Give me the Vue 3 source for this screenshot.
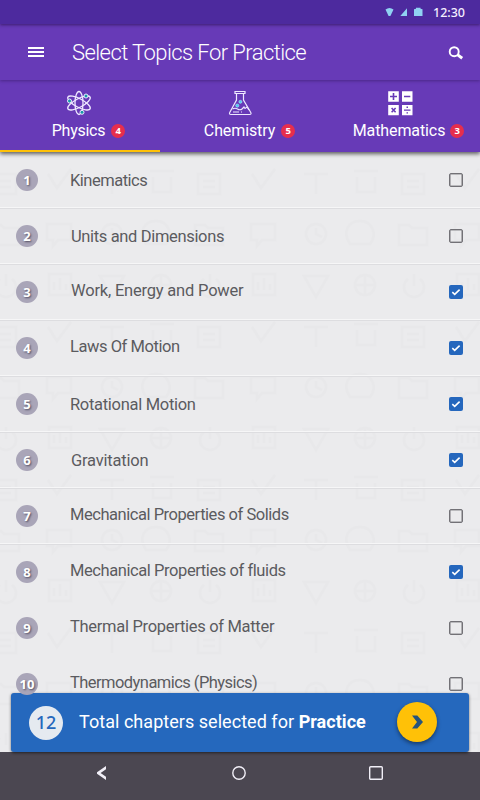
<script setup>
import { ref, computed } from 'vue'

const tabs = [
  { name: 'Physics', count: 4, icon: 'atom' },
  { name: 'Chemistry', count: 5, icon: 'flask' },
  { name: 'Mathematics', count: 3, icon: 'math' },
]
const activeTab = ref('Physics')

const topics = ref([
  { name: 'Kinematics', checked: false },
  { name: 'Units and Dimensions', checked: false },
  { name: 'Work, Energy and Power', checked: true, raised: true },
  { name: 'Laws Of Motion', checked: true, raised: true },
  { name: 'Rotational Motion', checked: true },
  { name: 'Gravitation', checked: true },
  { name: 'Mechanical Properties of Solids', checked: false, raised: true },
  { name: 'Mechanical Properties of fluids', checked: true, raised: true },
  { name: 'Thermal Properties of Matter', checked: false, raised: true },
  { name: 'Thermodynamics (Physics)', checked: false, raised: true },
])
const total = computed(() => tabs.reduce((sum, t) => sum + t.count, 0))
</script>

<template>
  <div class="screen">
    <div class="status">
      <svg class="signals" width="40" height="12" viewBox="0 0 40 12" fill="#90d2f2">
        <path d="M0.5 2.6 Q4.5 -0.8 8.5 2.6 L5.4 9 H3.6Z" />
        <path d="M15.3 9 L22 1.2 V9Z" />
        <path d="M29 2.2 L31 1.8 V.8 H35.5 V1.8 L37.5 2.2 V9 H29Z" />
      </svg>
      <span class="clock">12:30</span>
    </div>

    <header class="appbar">
      <svg class="menu" width="16" height="10" viewBox="0 0 16 10" fill="#fff">
        <path d="M0 0H16V2H0ZM0 4H16V6H0ZM0 8H16V10H0Z" />
      </svg>
      <h1 class="title">Select Topics For Practice</h1>
      <svg class="search" width="16" height="14" viewBox="0 0 16 14" fill="none" stroke="#fff">
        <circle cx="6.2" cy="5.7" r="4.5" stroke-width="1.9" />
        <path d="M9.4 8.6L14.2 12.2" stroke-width="3" />
      </svg>
    </header>

    <nav class="tabs">
      <div v-for="t in tabs" :key="t.name" class="tab" :class="{ active: t.name === activeTab }" @click="activeTab = t.name">
        <svg v-if="t.icon === 'atom'" class="tab-icon" width="26" height="26" viewBox="0 0 26 26" fill="none" stroke="#eee8ff" stroke-width="1.3">
          <ellipse cx="13" cy="13" rx="4" ry="11.5" />
          <ellipse cx="13" cy="13" rx="4.2" ry="12.6" transform="rotate(62 13 13)" />
          <ellipse cx="13" cy="13" rx="4.2" ry="12.6" transform="rotate(-62 13 13)" />
          <g fill="#159ba8" stroke-width="1">
            <circle cx="3.5" cy="11" r="2" /><circle cx="20" cy="6" r="2" /><circle cx="16" cy="22.3" r="2" />
          </g>
        </svg>
        <svg v-else-if="t.icon === 'flask'" class="tab-icon" width="26" height="26" viewBox="0 0 26 26" fill="none" stroke="#eee8ff" stroke-width="1.2">
          <path d="M8 1.5H18V3.5H8ZM9.5 3.5V10L3 22Q1.6 24.5 4 24.5H22.5Q25 24.5 23.5 22L16.5 10V3.5" />
          <path d="M15 19L17 17L18 18.5L20 17L22 20M5.5 19Q8 17.5 10.5 19T15 19M6 22H12M14 22H15" />
          <g fill="#4acdf0" stroke="#aee9ff" stroke-width=".6"><circle cx="10.3" cy="15.6" r="1.6" /><circle cx="13.4" cy="11.8" r="1.5" /></g>
        </svg>
        <svg v-else class="tab-icon" width="26" height="26" viewBox="0 0 26 26">
          <path fill="#fff" d="M1.2 1.2H11.8V11.8H1.2ZM15 1.2H25.5V11.8H15ZM1.2 15H11.8V25.3H1.2ZM15 15H25.5V25.3H15Z" />
          <path stroke="#673ab7" stroke-width="1.6" fill="none" d="M3 6.5H10M6.5 3V10M17 6.5H23.3M4.6 18L8.6 22.2M8.6 18L4.6 22.2" />
          <path stroke="#673ab7" stroke-width="1.4" d="M17 20.1H23.5M19.5 17.3H21M19.5 22.9H21" />
        </svg>
        <div class="tab-label"><span class="tab-name">{{ t.name }}</span><span class="badge">{{ t.count }}</span></div>
      </div>
    </nav>

    <main class="list">
      <svg class="backdrop" width="480" height="600" aria-hidden="true">
        <defs>
          <pattern id="school" x="40" width="204" height="153" patternUnits="userSpaceOnUse">
            <g fill="none" stroke="#000" stroke-width="2.5">
              <path d="M8 22L17 36L31 17M60 22H84M72 22V42M110 19H134M113 25V40H131V25M158 22H180V42H158ZM163 29H175M163 35H175" />
              <path d="M7 72H31V88H18L13 94V88H7ZM106 92C98 80 104 69 116 69S134 82 126 92ZM155 73H165L168 76H183V93H155Z" />
              <circle cx="72" cy="82" r="10" /><path d="M72 76V82L78 85" />
              <path d="M9 122H31V143H9ZM14 138V130M20 138V126M26 138V132M60 124H84L72 145ZM170 122V134M164 127A10 10 0 1 0 176 127" />
              <circle cx="121" cy="133" r="10" /><path d="M111 133H131M121 123V143" />
            </g>
          </pattern>
        </defs>
        <rect width="480" height="600" fill="url(#school)" />
      </svg>
      <div v-for="(t, i) in topics" :key="t.name" class="row">
        <span class="num">{{ i + 1 }}</span>
        <span class="topic" :class="['t' + (i + 1), { raised: t.raised }]">{{ t.name }}</span>
        <span class="check" :class="{ on: t.checked }" @click="t.checked = !t.checked">
          <svg v-if="t.checked" width="14" height="14" viewBox="0 0 14 14" fill="none" stroke="#fff" stroke-width="1.6"><path d="M3.3 7.2L5.7 9.4L10.6 4.6" /></svg>
        </span>
      </div>
    </main>

    <section class="summary">
      <span class="total">{{ total }}</span>
      <span class="summary-text">Total chapters selected for <b>Practice</b></span>
      <button class="go" aria-label="Continue">
        <svg width="14" height="14" viewBox="0 0 14 14" fill="#26547c"><path d="M2 .5H7.3L13 7L7.3 13.5H2L7 7Z" /></svg>
      </button>
    </section>

    <footer class="navbar">
      <svg width="12" height="14" viewBox="0 0 12 14" fill="#f1eff7"><path d="M10 0V3.2L4.6 7L10 10.8V14L1 7.8V6.2Z" /></svg>
      <svg width="14" height="14" viewBox="0 0 14 14" fill="none" stroke="#f1eff7" stroke-width="1.4"><circle cx="7" cy="7" r="6.2" /></svg>
      <svg width="14" height="14" viewBox="0 0 14 14" fill="none" stroke="#f1eff7" stroke-width="1.4"><rect x=".7" y=".7" width="12.6" height="12.6" rx="1" /></svg>
    </footer>
  </div>
</template>

<style>
body { margin: 0; }
</style>

<style scoped>
.screen { position: relative; width: 480px; height: 800px; overflow: hidden; display: flex; flex-direction: column; background: #ebebed; font-family: Roboto, "Noto Sans", sans-serif; color: #5b5b5f; box-sizing: border-box; }
.screen * { box-sizing: border-box; }
.status { height: 24px; flex: none; background: #4d2a9e; display: flex; align-items: center; justify-content: flex-end; padding-right: 14px; z-index: 3; box-shadow: 0 1px 3px rgba(30, 10, 60, .6); }
.signals { margin: 2px 8px 0 0; }
.clock { width: 33px; font: 500 12.5px/24px "Noto Sans", sans-serif; color: #f4efff; padding-top: 1px; white-space: nowrap; }
.appbar { height: 56px; flex: none; background: #673ab7; display: flex; align-items: center; padding: 0 16px 0 28px; z-index: 2; box-shadow: 0 1px 3px rgba(30, 10, 60, .4); }
.title { margin: 1px 0 0 28px; flex: 1; font-size: 22px; line-height: 30px; font-weight: 300; letter-spacing: -.58px; color: #fff; white-space: nowrap; }
.search { margin-top: 1px; }
.tabs { height: 72px; flex: none; background: #673ab7; display: grid; grid-template-columns: repeat(3, 160px); z-index: 1; box-shadow: 0 2px 4px rgba(0, 0, 0, .6); }
.tab { display: flex; flex-direction: column; align-items: center; padding-top: 10px; border-bottom: 2px solid transparent; }
.tab.active { border-bottom-color: #ffc107; }
.tab-icon { flex: none; }
.tab:first-child .tab-icon { margin-right: 2px; }
.tab-label { display: flex; align-items: center; height: 24px; margin-top: 3px; gap: 6px; padding-left: 19px; }
.tab:first-child .tab-label { padding-left: 17px; }
.tab:last-child .tab-label { padding-left: 17px; gap: 5px; }
.tab-name { font-size: 16px; line-height: 24px; color: #fff; white-space: nowrap; letter-spacing: -.1px; }
.tab:first-child .tab-name { letter-spacing: -.25px; }
.badge { width: 14px; height: 14px; margin-bottom: 1px; border-radius: 50%; background: #e62e4d; color: #fff; font: 700 9.5px/14px "Noto Sans", sans-serif; text-align: center; }
.list { position: relative; flex: 1; min-height: 0; overflow: hidden; }
.backdrop { position: absolute; inset: 0; opacity: .007; }
.row { position: relative; height: 56px; display: flex; align-items: center; padding: 0 17px 0 16px; border-top: 1px solid #dddde0; box-shadow: 0 -1px 0 #f6f6f7; }
.row:first-of-type, .row:nth-last-child(-n+2) { border-top-color: transparent; box-shadow: none; }
.num { position: relative; z-index: 5; width: 22px; height: 22px; flex: none; border-radius: 50%; background: #a9a5b8; color: #fff; font: 700 13px/22px "Noto Sans", sans-serif; text-align: center; text-shadow: 1px 1px 2px rgba(60, 55, 75, .8); margin-bottom: 1px; }
.topic { flex: 1; margin: 1px 0 0 32px; font-size: 16.5px; line-height: 24px; white-space: nowrap; letter-spacing: -.3px; }
.topic.raised { margin: 0 0 3px 32px; }
.t1 { letter-spacing: -.5px; }
.t2 { letter-spacing: -.35px; padding-left: 1px; }
.t3 { letter-spacing: -.2px; padding-left: 1px; }
.t4 { letter-spacing: -.44px; }
.t6 { letter-spacing: -.2px; padding-left: 1px; }
.t7 { letter-spacing: -.46px; }
.t8 { letter-spacing: -.42px; }
.t10 { letter-spacing: -.55px; }
.check { width: 14px; height: 14px; flex: none; border: 1px solid #727176; box-shadow: inset 0 0 0 .6px #8a898d; border-radius: 2px; margin-bottom: 1px; }
.check.on { border: 0; background: #2567bd; box-shadow: none; }
.check svg { display: block; }
.summary { position: absolute; left: 11px; top: 693px; width: 458px; height: 59px; z-index: 4; background: #2568bd; border-radius: 3px; box-shadow: 0 1px 3px rgba(0, 0, 0, .55); display: flex; align-items: center; padding: 0 32px 0 18px; }
.total { width: 34px; height: 34px; flex: none; border-radius: 50%; background: #e5eaf0; color: #2568bd; font: 500 18px/33px "Noto Sans", sans-serif; text-align: center; }
.summary-text { flex: 1; margin: 0 0 3px 16px; font-size: 18px; letter-spacing: .04px; color: #fff; white-space: nowrap; }
.summary-text b { font-weight: 700; }
.go { width: 40px; height: 40px; padding: 0; margin-bottom: 1px; border: 0; border-radius: 50%; background: #ffc107; display: flex; align-items: center; justify-content: center; box-shadow: 0 2px 4px rgba(0, 0, 0, .45); }
.navbar { height: 48px; flex: none; background: #4b4751; display: flex; align-items: center; justify-content: space-between; padding: 0 97px 6px 96px; }
</style>
